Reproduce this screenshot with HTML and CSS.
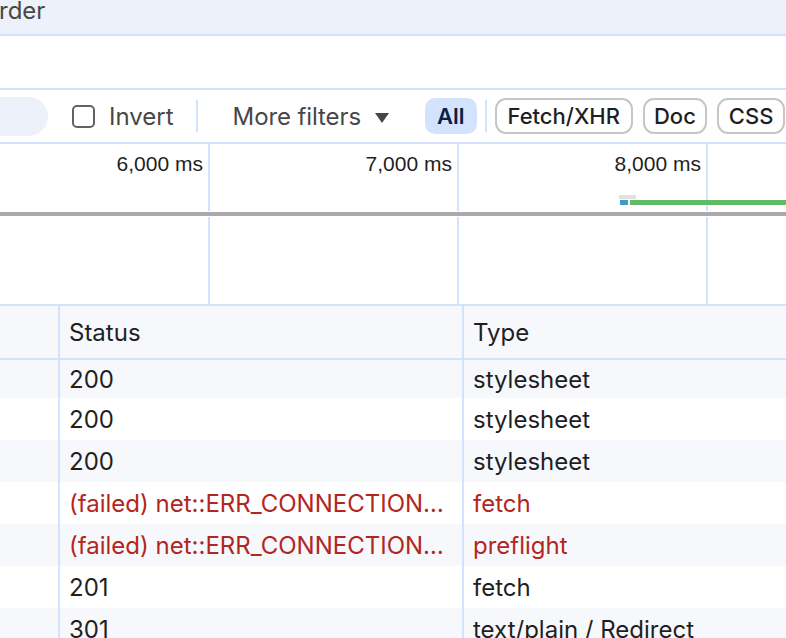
FILE: index.html
```html
<!DOCTYPE html>
<html>
<head>
<meta charset="utf-8">
<link rel="stylesheet" href="styles.css">
</head>
<body>
<div class="tabbar"><span class="tabtext">rder</span></div>
<div class="blank"></div>
<div class="filterbar">
  <div class="search"></div>
  <span class="checkbox"></span>
  <span class="label">Invert</span>
  <span class="vsep"></span>
  <span class="label more">More filters</span>
  <span class="caret"></span>
  <span class="chip active">All</span>
  <span class="vsep small"></span>
  <span class="chip wide">Fetch/XHR</span>
  <span class="chip narrow">Doc</span>
  <span class="chip">CSS</span>
</div>
<div class="overview">
  <div class="tick" style="left:208px"><span class="ticklabel">6,000 ms</span></div>
  <div class="tick" style="left:457px"><span class="ticklabel">7,000 ms</span></div>
  <div class="tick" style="left:706px"><span class="ticklabel">8,000 ms</span></div>
  <div class="divider"></div>
  <div class="bar wait" style="left:619px;width:17px"></div>
  <div class="bar dns" style="left:620px;width:8px"></div>
  <div class="bar recv" style="left:630px;width:160px"></div>
</div>
<div class="grid">
  <div class="row head">
    <div class="cell c1"></div>
    <div class="cell c2"><span class="txt">Status</span></div>
    <div class="cell c3"><span class="txt">Type</span></div>
  </div>
  <div class="row odd first">
    <div class="cell c1"></div>
    <div class="cell c2"><span class="txt">200</span></div>
    <div class="cell c3"><span class="txt">stylesheet</span></div>
  </div>
  <div class="row">
    <div class="cell c1"></div>
    <div class="cell c2"><span class="txt">200</span></div>
    <div class="cell c3"><span class="txt">stylesheet</span></div>
  </div>
  <div class="row odd">
    <div class="cell c1"></div>
    <div class="cell c2"><span class="txt">200</span></div>
    <div class="cell c3"><span class="txt">stylesheet</span></div>
  </div>
  <div class="row err">
    <div class="cell c1"></div>
    <div class="cell c2"><span class="txt">(failed) net::ERR_CONNECTION…</span></div>
    <div class="cell c3"><span class="txt">fetch</span></div>
  </div>
  <div class="row odd err">
    <div class="cell c1"></div>
    <div class="cell c2"><span class="txt">(failed) net::ERR_CONNECTION…</span></div>
    <div class="cell c3"><span class="txt">preflight</span></div>
  </div>
  <div class="row">
    <div class="cell c1"></div>
    <div class="cell c2"><span class="txt">201</span></div>
    <div class="cell c3"><span class="txt">fetch</span></div>
  </div>
  <div class="row odd">
    <div class="cell c1"></div>
    <div class="cell c2"><span class="txt">301</span></div>
    <div class="cell c3"><span class="txt">text/plain / Redirect</span></div>
  </div>
</div>
</body>
</html>
```
FILE: styles.css
```css
* { box-sizing: border-box; }
html, body { margin: 0; padding: 0; }
body {
  width: 786px;
  height: 638px;
  overflow: hidden;
  background: #ffffff;
  font-family: Inter, "Noto Sans", sans-serif;
  color: #1f1f1f;
}
.tabbar {
  height: 36px;
  background: #edf2fa;
  border-bottom: 2px solid #d3e3fd;
  display: flex;
  align-items: flex-start;
}
.tabtext {
  font-size: 24px;
  line-height: 24px;
  color: #474747;
  margin-top: -1px;
  margin-left: -1px;
}
.blank {
  height: 54px;
  border-bottom: 2px solid #d3e3fd;
}
.filterbar {
  height: 54px;
  border-bottom: 2px solid #d3e3fd;
  display: flex;
  align-items: center;
  white-space: nowrap;
}
.search {
  width: 48px;
  height: 39px;
  background: #edf2fa;
  border-radius: 0 20px 20px 0;
  flex: none;
}
.checkbox {
  width: 23px;
  height: 23px;
  border: 2px solid #5f6368;
  border-radius: 5px;
  margin-left: 24px;
  flex: none;
}
.label {
  font-size: 24px;
  color: #474747;
  margin-left: 14px;
}
.vsep {
  width: 2px;
  height: 32px;
  background: #d3e3fd;
  margin-left: 22px;
  flex: none;
}
.vsep.small {
  margin-left: 8px;
  margin-right: 8px;
}
.label.more { margin-left: 35px; letter-spacing: -0.1px; }
.caret {
  width: 0;
  height: 0;
  border-left: 7px solid transparent;
  border-right: 7px solid transparent;
  border-top: 10px solid #474747;
  margin-left: 14px;
  margin-top: 3px;
  flex: none;
}
.chip {
  height: 36px;
  font-size: 22px;
  font-weight: 500;
  display: flex;
  align-items: center;
  padding: 0 10px;
  border: 2px solid #c4c7c5;
  border-radius: 11px;
  margin-right: 10px;
  color: #1f1f1f;
  flex: none;
}
.chip.wide { padding: 0 11px; }
.chip.narrow { padding: 0 9px; }
.chip.active {
  background: #d3e3fd;
  border-color: #d3e3fd;
  color: #0a1f44;
  font-weight: 600;
  margin-left: 36px;
  margin-right: 0;
  border-radius: 10px;
}
.overview {
  position: relative;
  height: 162px;
  border-bottom: 2px solid #d3e3fd;
  overflow: hidden;
}
.tick {
  position: absolute;
  top: 0;
  bottom: 0;
  width: 2px;
  background: #d3e3fd;
}
.ticklabel {
  position: absolute;
  right: 7px;
  top: 8px;
  font-family: "Liberation Sans", Arial, sans-serif;
  font-size: 21px;
  color: #1f1f1f;
  white-space: nowrap;
}
.divider {
  position: absolute;
  left: 0;
  right: 0;
  top: 67px;
  height: 6px;
  background: #ffffff;
  border-top: 1px solid #ffffff;
  border-bottom: 1px solid #ffffff;
}
.divider::after {
  content: "";
  display: block;
  height: 4px;
  background: #aaaaaa;
}
.bar {
  position: absolute;
  height: 5px;
}
.bar.wait { top: 51px; height: 4px; background: #e1e1df; }
.bar.dns { top: 56px; background: #3f9bc8; }
.bar.recv { top: 56px; background: #61bb64; }
.grid {
  display: flex;
  flex-direction: column;
}
.row {
  display: flex;
  height: 42px;
  font-size: 24px;
}
.row.odd { background: #f6f8fc; }
.row.first { height: 38px; }
.row.head {
  height: 54px;
  background: #f6f8fc;
  border-bottom: 2px solid #d3e3fd;
}
.cell {
  display: flex;
  align-items: center;
  white-space: nowrap;
  overflow: hidden;
  padding-left: 9px;
  padding-right: 10px;
}
.cell.c1 {
  width: 60px;
  flex: none;
  border-right: 2px solid #d3e3fd;
}
.cell.c2 {
  width: 404px;
  flex: none;
  border-right: 2px solid #d3e3fd;
}
.cell.c3 { flex: 1; }
.row.err { color: #b3261e; }
```
